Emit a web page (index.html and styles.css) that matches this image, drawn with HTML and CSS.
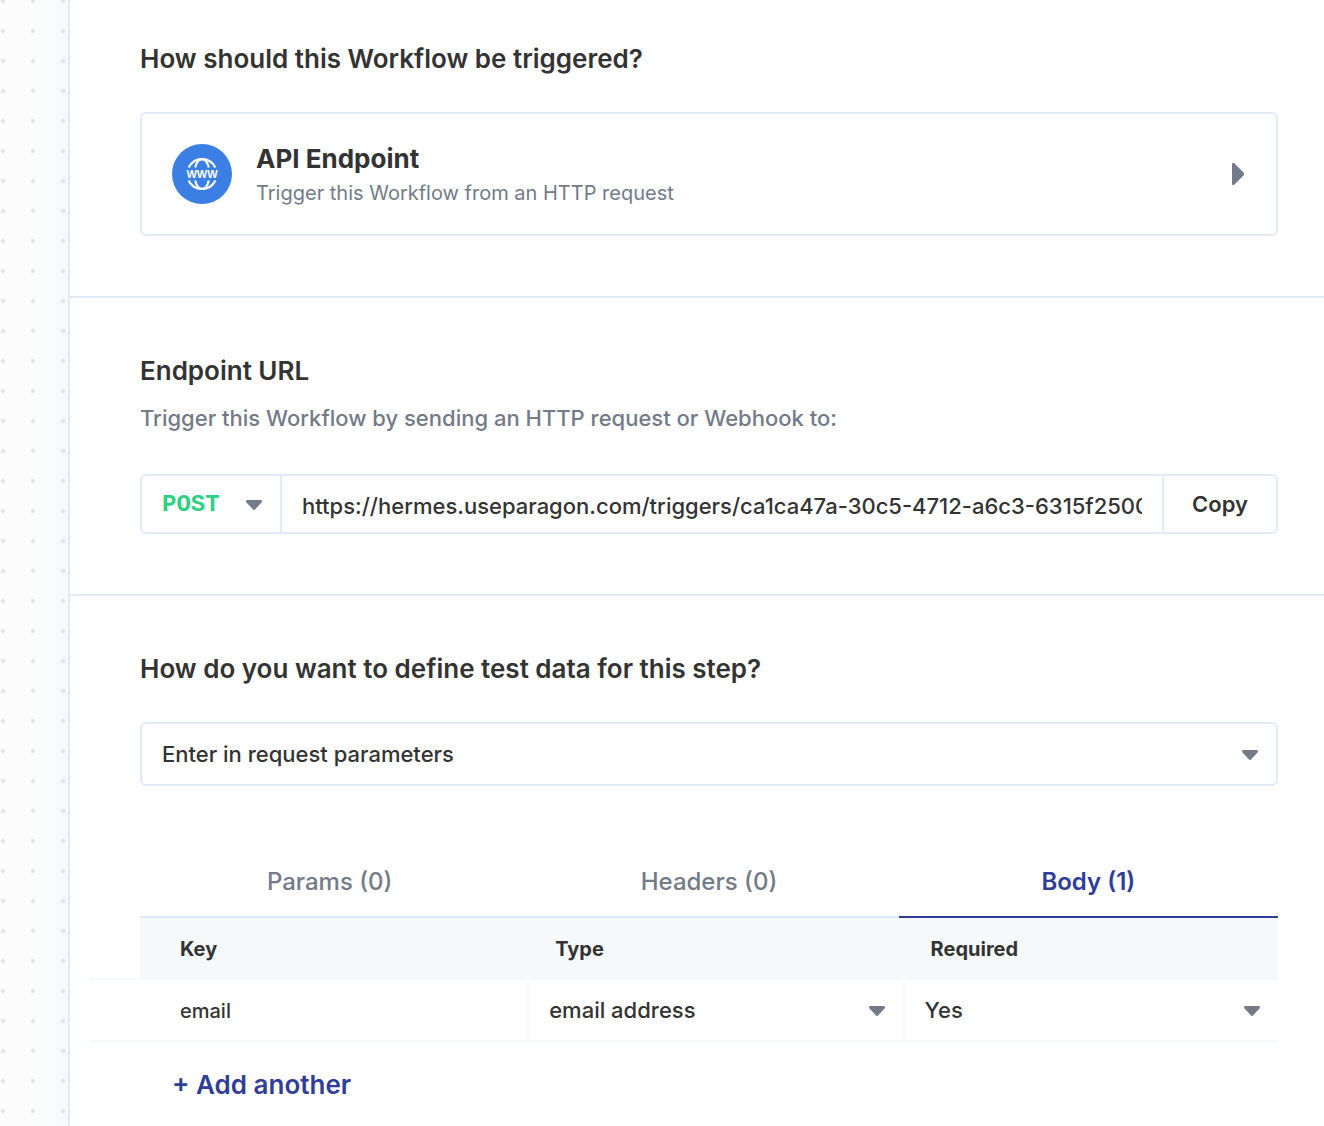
FILE: index.html
```html
<!DOCTYPE html>
<html lang="en">
<head>
<meta charset="utf-8">
<title>Workflow trigger</title>
<link rel="stylesheet" href="styles.css">
</head>
<body>
<div class="editor">
  <div class="canvas"></div>
  <main class="panel">
    <section class="section section-first">
      <h2 class="heading">How should this Workflow be triggered?</h2>
      <button class="trigger" type="button">
        <svg class="trigger-icon" viewBox="0 0 60 60" aria-hidden="true">
          <circle cx="30" cy="30" r="30" fill="#3b7fe4"/>
          <g fill="none" stroke="#fff" stroke-width="2.2">
            <path d="M16.600 23.600C19.200 18.500 24.200 15.100 30 15.100s10.800 3.400 13.400 8.500"/>
            <path d="M23.200 23.600C24.400 18.500 27 15.100 30 15.100s5.600 3.400 6.800 8.500"/>
            <path d="M16.600 36.400C19.200 41.500 24.200 44.900 30 44.900s10.800-3.400 13.400-8.500"/>
            <path d="M23.200 36.400C24.400 41.500 27 44.900 30 44.900s5.600-3.400 6.800-8.500"/>
          </g>
          <text class="www" x="30" y="34" text-anchor="middle">WWW</text>
        </svg>
        <span class="trigger-text">
          <span class="trigger-name">API Endpoint</span>
          <span class="trigger-note">Trigger this Workflow from an HTTP request</span>
        </span>
        <svg class="trigger-arrow" viewBox="0 0 12 22" aria-hidden="true"><path d="M0 1Q0 0 1 0H2L12 10V12L2 22H1Q0 22 0 21Z" fill="#727b87"/></svg>
      </button>
    </section>

    <section class="section">
      <h2 class="heading">Endpoint URL</h2>
      <p class="note">Trigger this Workflow by sending an HTTP request or Webhook to:</p>
      <div class="url-bar">
        <select class="select method" aria-label="Request method"><option>POST</option></select>
        <input class="url" type="text" aria-label="Endpoint URL" readonly value="https://hermes.useparagon.com/triggers/ca1ca47a-30c5-4712-a6c3-6315f2500">
        <button class="copy" type="button">Copy</button>
      </div>
    </section>

    <section class="section">
      <h2 class="heading"><label for="source">How do you want to define test data for this step?</label></h2>
      <select class="select source" id="source"><option>Enter in request parameters</option></select>
      <div class="tabs" role="tablist">
        <button class="tab" type="button" role="tab">Params (0)</button>
        <button class="tab" type="button" role="tab">Headers (0)</button>
        <button class="tab tab-active" type="button" role="tab" aria-selected="true">Body (1)</button>
      </div>
      <table class="fields">
        <colgroup><col class="col-gutter"><col><col class="col-choice"><col class="col-choice"></colgroup>
        <thead>
          <tr><td class="gutter"></td><th>Key</th><th>Type</th><th>Required</th></tr>
        </thead>
        <tbody>
          <tr>
            <td></td>
            <td><input class="key" type="text" aria-label="Key" value="email"></td>
            <td class="choice"><select class="select" aria-label="Type"><option>email address</option></select></td>
            <td class="choice"><select class="select" aria-label="Required"><option>Yes</option></select></td>
          </tr>
        </tbody>
      </table>
      <button class="add" type="button">+ Add another</button>
    </section>
  </main>
</div>
</body>
</html>
```
FILE: styles.css
```css
* { box-sizing: border-box; }

body {
  margin: 0;
  background: #fff;
  color: #333;
  font-family: Inter, "Liberation Sans", sans-serif;
  font-weight: 500;
}

button, input, select {
  margin: 0;
  padding: 0;
  border: 0;
  border-radius: 0;
  background: none;
  color: inherit;
  font: inherit;
}

.editor {
  display: grid;
  grid-template-columns: 68px minmax(0, 1fr);
  min-height: 100vh;
}

.canvas {
  background:
    radial-gradient(circle at 3px 16px, #e2e2e2 1px, transparent 3px) 0 -15px / 30px 30px,
    linear-gradient(to right, #fcfcfc 40px, #f6f9fb);
}

.panel { border-left: 2px solid #e0ebf7; }

.section { padding: 60px 46px 60px 70px; }
.section + .section { border-top: 2px solid #e0ebf7; }
.section-first { padding-top: 46px; }
.section:last-child { padding-bottom: 0; }

.heading {
  margin: 0 0 40px;
  font-size: 26px;
  line-height: 26px;
  font-weight: 600;
}

.trigger {
  display: flex;
  align-items: center;
  gap: 24px;
  width: 100%;
  height: 124px;
  padding: 0 32px 0 30px;
  border: 2px solid #e0ebf7;
  border-radius: 6px;
  text-align: left;
}
.trigger-icon { width: 60px; height: 60px; }
.www { fill: #fff; font-family: "Liberation Sans", sans-serif; font-size: 11px; font-weight: 700; }
.trigger-text { flex: 1; display: grid; gap: 4px; padding-top: 2px; }
.trigger-name { font-size: 26px; line-height: 32px; font-weight: 700; }
.trigger-note { font-size: 20px; line-height: 28px; font-weight: 400; color: #727b87; }
.trigger-arrow { width: 12px; height: 22px; }

.note {
  margin: -20px 0 42px;
  font-size: 22px;
  line-height: 28px;
  color: #727b87;
}

.select {
  appearance: none;
  width: 100%;
  height: 60px;
  padding: 0 40px 0 20px;
  font-size: 22px;
  background: url("data:image/svg+xml,%3Csvg xmlns='http://www.w3.org/2000/svg' width='16' height='12'%3E%3Cpath d='M1 2H15Q16 2 16 4L9 11.500Q8 12.500 7 11.500L0 4Q0 2 1 2Z' fill='%23727b87'/%3E%3C/svg%3E") no-repeat right 18px center;
}

.url-bar {
  display: flex;
  height: 60px;
  border: 2px solid #e0ebf7;
  border-radius: 6px;
}
.method {
  width: 138px;
  height: 100%;
  color: #2dd184;
  font-family: "Liberation Mono", monospace;
  font-size: 24px;
  font-weight: 700;
}
.url {
  flex: 1;
  min-width: 0;
  padding: 4px 20px 0;
  border-left: 2px solid #e0ebf7;
  font-size: 22px;
}
.copy {
  width: 114px;
  border-left: 2px solid #e0ebf7;
  border-radius: 4px;
  font-size: 22px;
  font-weight: 600;
}

.source {
  display: block;
  height: 64px;
  border: 2px solid #e0ebf7;
  border-radius: 6px;
}

.tabs {
  display: grid;
  grid-template-columns: repeat(3, 1fr);
  margin-top: 60px;
}
.tab {
  height: 72px;
  border-bottom: 2px solid #e0e9f7;
  font-size: 24px;
  color: #727b87;
}
.tab-active { border-color: #2f3d99; color: #2f3d99; font-weight: 600; }

.fields {
  width: calc(100% + 50px);
  margin-left: -50px;
  border-spacing: 0;
  table-layout: fixed;
}
.col-gutter { width: 50px; }
.col-choice { width: 31.6%; }
.fields th, .fields td { padding: 0; border-bottom: 2px solid #f5f9fa; }
.fields th {
  height: 62px;
  padding: 2px 0 0 28px;
  background: #f5f9fa;
  font-size: 20px;
  font-weight: 700;
  text-align: left;
}
.fields .gutter + th { padding-left: 40px; }
.fields .choice { border-left: 2px solid #f5f9fa; }
.fields .select { display: block; }
.key { display: block; width: 100%; height: 60px; padding: 2px 40px 0; font-size: 20px; }

.add {
  margin: 28px 0 0 32px;
  font-size: 26px;
  line-height: 30px;
  font-weight: 600;
  color: #2f3d99;
}
```
